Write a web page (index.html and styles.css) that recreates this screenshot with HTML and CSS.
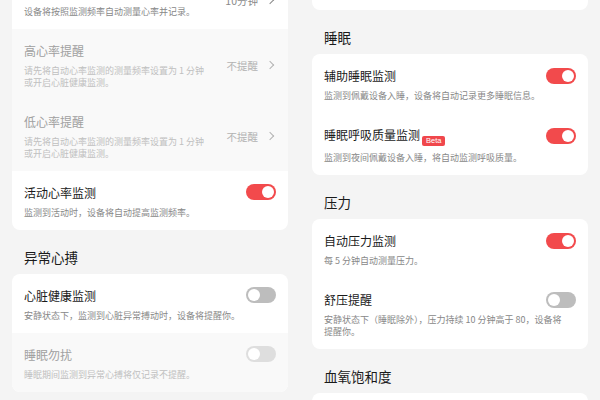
FILE: index.html
```html
<!DOCTYPE html>
<html lang="zh-CN">
<head>
    <meta charset="UTF-8">
    <meta name="viewport" content="width=device-width, initial-scale=1.0">
    <title>健康监测设置</title>
    <link rel="stylesheet" href="styles.css">
</head>
<body>
    <main class="page">
        <!-- left column: scrolled part of heart rate settings -->
        <section class="column column-left">
            <div class="card">
                <div class="row">
                    <div class="row-text">
                        <div class="title">自动心率监测</div>
                        <div class="desc">设备将按照监测频率自动测量心率并记录。</div>
                    </div>
                    <div class="value">10分钟 <span class="chevron"></span></div>
                </div>
                <div class="row disabled">
                    <div class="row-text">
                        <div class="title">高心率提醒</div>
                        <div class="desc">请先将自动心率监测的测量频率设置为 1 分钟<br>或开启心脏健康监测。</div>
                    </div>
                    <div class="value">不提醒 <span class="chevron"></span></div>
                </div>
                <div class="row disabled">
                    <div class="row-text">
                        <div class="title">低心率提醒</div>
                        <div class="desc">请先将自动心率监测的测量频率设置为 1 分钟<br>或开启心脏健康监测。</div>
                    </div>
                    <div class="value">不提醒 <span class="chevron"></span></div>
                </div>
                <div class="row">
                    <div class="row-text">
                        <div class="row-head">
                            <div class="title">活动心率监测</div>
                            <span class="toggle on"></span>
                        </div>
                        <div class="desc">监测到活动时，设备将自动提高监测频率。</div>
                    </div>
                </div>
            </div>

            <h2 class="section-title">异常心搏</h2>
            <div class="card">
                <div class="row">
                    <div class="row-text">
                        <div class="row-head">
                            <div class="title">心脏健康监测</div>
                            <span class="toggle"></span>
                        </div>
                        <div class="desc">安静状态下，监测到心脏异常搏动时，设备将提醒你。</div>
                    </div>
                </div>
                <div class="row disabled">
                    <div class="row-text">
                        <div class="row-head">
                            <div class="title">睡眠勿扰</div>
                            <span class="toggle"></span>
                        </div>
                        <div class="desc">睡眠期间监测到异常心搏将仅记录不提醒。</div>
                    </div>
                </div>
            </div>
        </section>

        <!-- right column -->
        <section class="column column-right">
            <div class="card card-tail"></div>

            <h2 class="section-title">睡眠</h2>
            <div class="card">
                <div class="row">
                    <div class="row-text">
                        <div class="row-head">
                            <div class="title">辅助睡眠监测</div>
                            <span class="toggle on"></span>
                        </div>
                        <div class="desc">监测到佩戴设备入睡，设备将自动记录更多睡眠信息。</div>
                    </div>
                </div>
                <div class="row">
                    <div class="row-text">
                        <div class="row-head">
                            <div class="title">睡眠呼吸质量监测<span class="badge">Beta</span></div>
                            <span class="toggle on"></span>
                        </div>
                        <div class="desc">监测到夜间佩戴设备入睡，将自动监测呼吸质量。</div>
                    </div>
                </div>
            </div>

            <h2 class="section-title">压力</h2>
            <div class="card">
                <div class="row">
                    <div class="row-text">
                        <div class="row-head">
                            <div class="title">自动压力监测</div>
                            <span class="toggle on"></span>
                        </div>
                        <div class="desc">每 5 分钟自动测量压力。</div>
                    </div>
                </div>
                <div class="row">
                    <div class="row-text">
                        <div class="row-head">
                            <div class="title">舒压提醒</div>
                            <span class="toggle"></span>
                        </div>
                        <div class="desc">安静状态下（睡眠除外），压力持续 10 分钟高于 80，设备将<br>提醒你。</div>
                    </div>
                </div>
            </div>

            <h2 class="section-title">血氧饱和度</h2>
            <div class="card card-head"></div>
        </section>
    </main>
</body>
</html>
```

FILE: styles.css
```css
body {
    margin: 0;
    background-color: #f4f4f4;
    font-family: "Noto Sans CJK SC", "Noto Sans", sans-serif;
    color: #1a1a1a;
    overflow: hidden;
}
.page {
    display: grid;
    grid-template-columns: 300px 300px;
    height: 400px;
    overflow: hidden;
}
.column {
    padding: 0 12px;
}
.column-left {
    margin-top: -30.5px;
}
.column-right {
    margin-top: -50px;
}
.card {
    background: #fff;
    border-radius: 8px;
    overflow: hidden;
}
.card-tail {
    height: 60px;
}
.card-head {
    height: 60px;
}
.section-title {
    margin: 0;
    padding: 18px 12px 8px;
    font-size: 13.5px;
    line-height: 18px;
    font-weight: 400;
    color: #1a1a1a;
}
.row {
    display: flex;
    align-items: center;
    gap: 16px;
    padding: 13px 12px 11px;
}
.row.disabled {
    background: #f9f9f9;
}
.row-text {
    flex: 1;
}
.row-head {
    display: flex;
    justify-content: space-between;
    align-items: center;
}
.title {
    font-size: 12px;
    line-height: 17px;
}
.desc {
    margin-top: 6px;
    font-size: 9px;
    line-height: 12px;
    color: #888;
}
.disabled .title {
    color: #a0a0a0;
}
.disabled .desc {
    color: #c0c0c0;
}
.value {
    display: flex;
    align-items: center;
    gap: 9px;
    font-size: 10.5px;
    color: #8a8a8a;
    white-space: nowrap;
}
.disabled .value {
    color: #b3b3b3;
}
.chevron {
    width: 5px;
    height: 5px;
    border-top: 1.2px solid currentColor;
    border-right: 1.2px solid currentColor;
    transform: rotate(45deg);
    margin-right: 3px;
}
.badge {
    display: inline-block;
    margin-left: 2px;
    padding: 0 4px;
    height: 10px;
    line-height: 10px;
    border-radius: 2px;
    background: #f0474c;
    color: #fff;
    font-family: "Liberation Sans", sans-serif;
    font-size: 7.5px;
    vertical-align: -3px;
}
.toggle {
    position: relative;
    flex: none;
    width: 30px;
    height: 16px;
    border-radius: 8px;
    background: #bdbdbd;
}
.toggle::after {
    content: "";
    position: absolute;
    top: 2px;
    left: 2px;
    width: 12px;
    height: 12px;
    border-radius: 50%;
    background: #fff;
}
.toggle.on {
    background: #f24a4c;
}
.toggle.on::after {
    left: 16px;
}
.disabled .toggle {
    background: #dedede;
}
```
